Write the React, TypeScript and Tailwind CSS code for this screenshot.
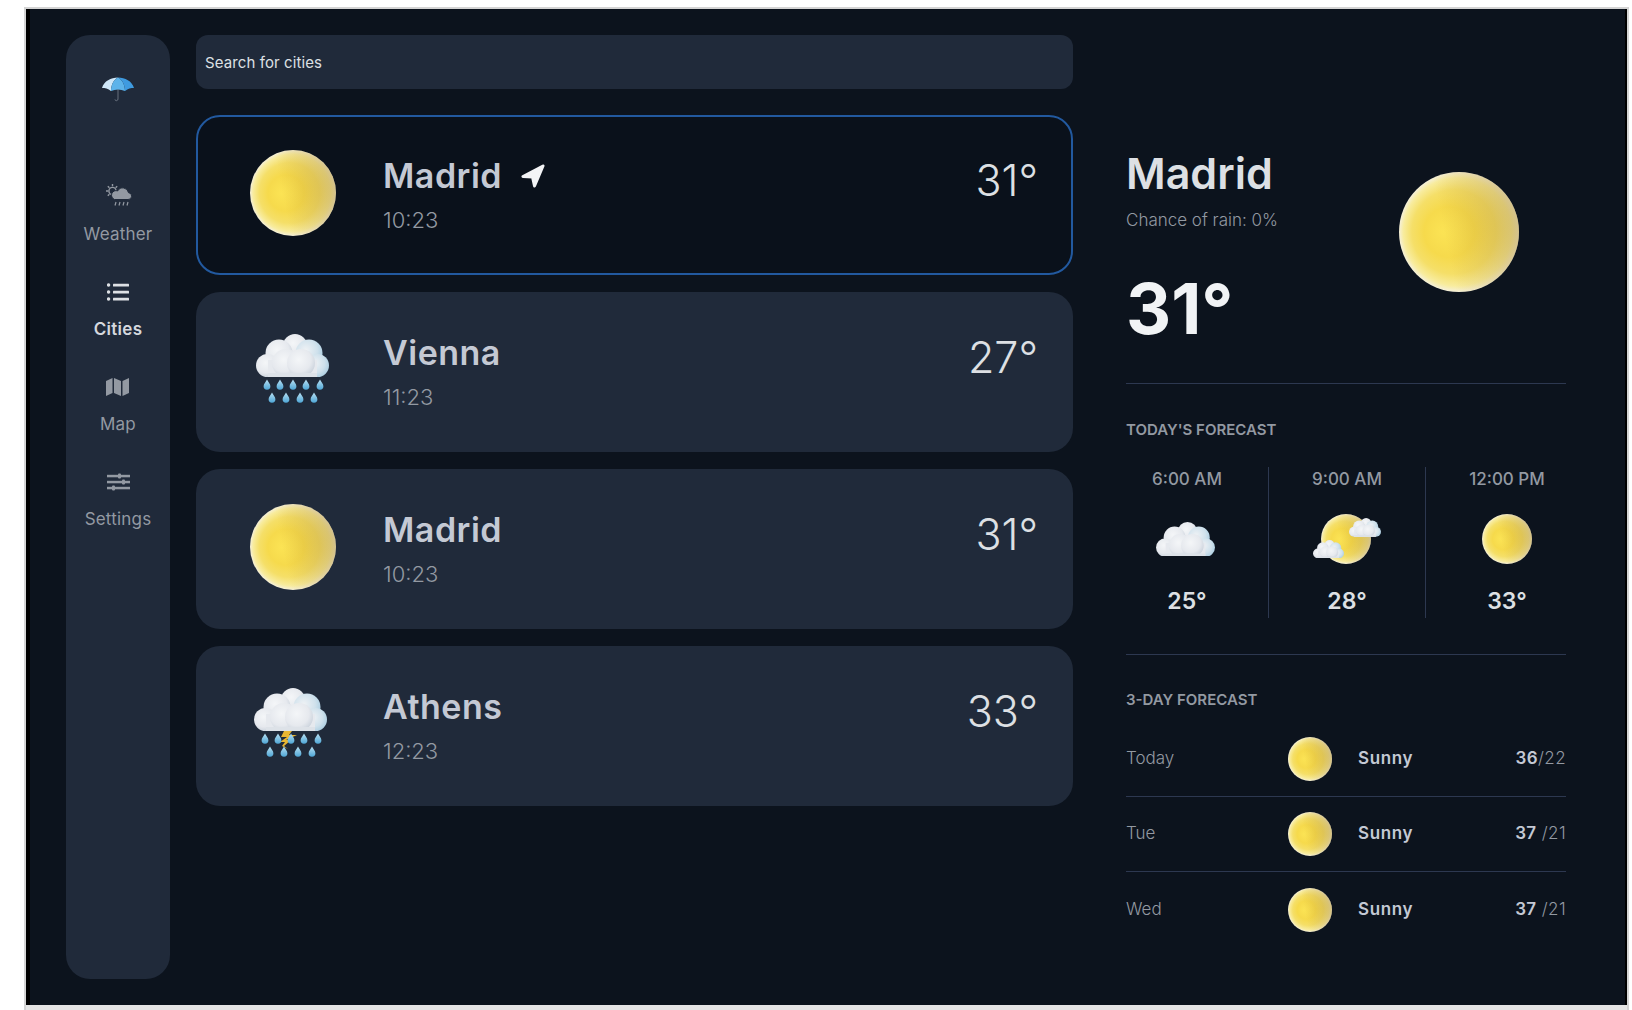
const Defs = () => (
  <svg className="absolute h-0 w-0" aria-hidden="true">
    <defs>
      <radialGradient id="sunBase" cx="50%" cy="50%" r="50%" fx="36%" fy="50%">
        <stop offset="0%" stopColor="#fbe354" />
        <stop offset="42%" stopColor="#f6da4c" />
        <stop offset="70%" stopColor="#f5df68" />
        <stop offset="90%" stopColor="#f8ec9e" />
        <stop offset="100%" stopColor="#f5f0da" />
      </radialGradient>
      <linearGradient id="sunShade" x1="0" y1="0.6" x2="1" y2="0.4">
        <stop offset="38%" stopColor="#b8902a" stopOpacity="0" />
        <stop offset="100%" stopColor="#a8862e" stopOpacity="0.45" />
      </linearGradient>
      <radialGradient id="puff" cx="42%" cy="38%" r="62%">
        <stop offset="0%" stopColor="#f4f6f8" />
        <stop offset="70%" stopColor="#e6e9ee" />
        <stop offset="100%" stopColor="#cfd6df" />
      </radialGradient>
      <radialGradient id="puffBlue" cx="38%" cy="40%" r="66%">
        <stop offset="0%" stopColor="#eff2f5" />
        <stop offset="65%" stopColor="#cfe1ec" />
        <stop offset="100%" stopColor="#aecfe2" />
      </radialGradient>
      <linearGradient id="drop" x1="0" y1="0" x2="0" y2="1">
        <stop offset="0%" stopColor="#b9e0f2" />
        <stop offset="100%" stopColor="#4ea6d6" />
      </linearGradient>
    </defs>
  </svg>
);

const Sun = ({ size }: { size: number }) => (
  <svg width={size} height={size} viewBox="0 0 100 100" className="shrink-0">
    <circle cx="50" cy="50" r="50" fill="url(#sunBase)" />
    <circle cx="50" cy="50" r="50" fill="url(#sunShade)" />
  </svg>
);

// cloud is 73 wide, 43 high in its own units
const CloudShape = () => (
  <g>
    <circle cx="39" cy="12" r="12" fill="url(#puff)" />
    <circle cx="23" cy="19" r="13.500" fill="url(#puff)" />
    <circle cx="53" cy="19" r="13.500" fill="url(#puffBlue)" />
    <circle cx="11.500" cy="31.500" r="11.500" fill="url(#puff)" />
    <circle cx="61.500" cy="31.500" r="11.500" fill="url(#puffBlue)" />
    <rect x="12" y="26" width="49" height="17" fill="#e6e9ee" />
    <circle cx="30" cy="29" r="14" fill="url(#puff)" />
    <circle cx="45" cy="29" r="14" fill="url(#puff)" />
    <rect x="12" y="39" width="49" height="4" fill="#dde2e8" />
  </g>
);

const Drop = ({ x, y }: { x: number; y: number }) => (
  <path
    d={`M${x} ${y - 5.5}c1.2 2.6 3.4 4.4 3.4 6.8a3.4 3.4 0 0 1-6.8 0c0-2.4 2.2-4.200 3.400-6.800z`}
    fill="url(#drop)"
  />
);

const topDrops = [17, 30, 43, 56, 70];
const lowDrops = [22, 36, 50, 64];

const RainIcon = ({ bolt }: { bolt?: boolean }) => (
  <svg width="86" height="86" viewBox="0 0 86 86" className="shrink-0">
    <g transform={bolt ? 'translate(-2 0)' : undefined}>
      {bolt && (
        <path
          d="M36 50h8l-3 4h8l-11 5h5l-7 6 4 3-6-3 3-4h-5l7-5h-6z"
          fill="#e8b531"
        />
      )}
      {topDrops.map((x) => (
        <Drop key={x} x={x} y={58} />
      ))}
      {lowDrops.map((x) => (
        <Drop key={x} x={x} y={71} />
      ))}
      <g transform="translate(6 7)">
        <CloudShape />
      </g>
    </g>
  </svg>
);

const Cloud = ({ width }: { width: number }) => (
  <svg width={width} height={(width * 43) / 73} viewBox="0 0 73 43">
    <CloudShape />
  </svg>
);

const PartlyCloudy = () => (
  <div className="relative h-[50px] w-[68px]">
    <div className="absolute left-[8px] top-0">
      <Sun size={50} />
    </div>
    <div className="absolute left-[36px] top-[4px]">
      <Cloud width={32} />
    </div>
    <div className="absolute left-0 top-[26px]">
      <Cloud width={31} />
    </div>
  </div>
);

const Logo = () => (
  <svg width="32" height="25" viewBox="0 0 32 25">
    <path d="M16 12v10c0 2.200-3 2.200-3 .4" fill="none" stroke="#6f7784" strokeWidth="0.9" />
    <path d="M0 11C2 4 9 0.500 16 0.500 11 3 9 9 9 14 6 11.500 3 11 0 11z" fill="#cfe7f8" />
    <path d="M9 14c0-5 2-11 7-13.500 5 2.500 7 8.500 7 13.500-4.500-2-9.500-2-14 0z" fill="#5cb3ea" />
    <path d="M23 14c0-5-2-11-7-13.500 7 0 14 3.500 16 10.500-3 0-6 .5-9 3z" fill="#3f9be0" />
  </svg>
);

const WeatherNav = () => (
  <svg width="27" height="24" viewBox="0 0 27 24" fill="none" stroke="#9399a2" className="-mt-[4px]">
    <circle cx="7.500" cy="8" r="3.600" strokeWidth="1.400" />
    <path
      d="M7.500 1v2.200M1 8h2.200M2.800 3.200l1.600 1.600M12.200 3.200l-1.600 1.600M2.800 12.800l1.600-1.600"
      strokeWidth="1.400"
    />
    <path
      d="M9.500 16.500h13.500a3.400 3.400 0 0 0 .5-6.800 5.800 5.800 0 0 0-10.800-1.800 4.400 4.400 0 0 0-3.200 8.600z"
      fill="#9399a2"
      stroke="#202a3a"
    />
    <path d="M11 19l-1 3.500M15 19l-1 3.500M19 19l-1 3.500M23 19l-1 3.500" strokeWidth="1.200" />
  </svg>
);

const ListNav = () => (
  <svg width="22" height="18" viewBox="0 0 22 18" fill="#dde0e4">
    <circle cx="1.600" cy="2" r="1.700" />
    <circle cx="1.600" cy="9" r="1.700" />
    <circle cx="1.600" cy="16" r="1.700" />
    <rect x="6" y="0.700" width="16" height="2.700" rx="0.500" />
    <rect x="6" y="7.700" width="16" height="2.700" rx="0.500" />
    <rect x="6" y="14.700" width="16" height="2.700" rx="0.500" />
  </svg>
);

const MapNav = () => (
  <svg width="23" height="18" viewBox="0 0 23 18" fill="#9399a2">
    <path d="M0 3l6.500-3v15L0 18z" />
    <path d="M8 0l7 3v15l-7-3z" />
    <path d="M16.500 3L23 0v15l-6.500 3z" />
  </svg>
);

const SlidersNav = () => (
  <svg width="23" height="18" viewBox="0 0 23 18" fill="#9399a2">
    <rect y="1.800" width="23" height="2.500" />
    <rect y="7.800" width="23" height="2.500" />
    <rect y="13.800" width="23" height="2.500" />
    <rect x="11" y="0.500" width="3" height="5" rx="1" />
    <rect x="15" y="6.500" width="3" height="5" rx="1" />
    <rect x="5" y="12.500" width="3" height="5" rx="1" />
  </svg>
);

const NavArrow = () => (
  <svg width="24" height="24" viewBox="0 0 24 24" fill="#f3f4f6">
    <path
      d="M22 2L2 12.500 11.500 13 13.500 22z"
      stroke="#f3f4f6"
      strokeWidth="3"
      strokeLinejoin="round"
    />
  </svg>
);

const navItems = [
  { label: 'Weather', icon: <WeatherNav />, active: false },
  { label: 'Cities', icon: <ListNav />, active: true },
  { label: 'Map', icon: <MapNav />, active: false },
  { label: 'Settings', icon: <SlidersNav />, active: false },
];

const cities = [
  { name: 'Madrid', time: '10:23', temp: '31°', icon: <Sun size={86} />, selected: true },
  { name: 'Vienna', time: '11:23', temp: '27°', icon: <RainIcon />, selected: false },
  { name: 'Madrid', time: '10:23', temp: '31°', icon: <Sun size={86} />, selected: false },
  { name: 'Athens', time: '12:23', temp: '33°', icon: <RainIcon bolt />, selected: false },
];

const todays = [
  { time: '6:00 AM', temp: '25°', icon: <div className="mr-[3px]"><Cloud width={59} /></div> },
  { time: '9:00 AM', temp: '28°', icon: <PartlyCloudy /> },
  { time: '12:00 PM', temp: '33°', icon: <Sun size={50} /> },
];

const days = [
  { day: 'Today', high: '36', low: '/22' },
  { day: 'Tue', high: '37', low: ' /21' },
  { day: 'Wed', high: '37', low: ' /21' },
];

const Sidebar = () => (
  <aside className="flex h-[944px] w-[104px] shrink-0 flex-col items-center rounded-[24px] bg-[#202a3a] pt-[42px]">
    <Logo />
    <nav className="mt-[82px] flex flex-col items-center gap-[31px]">
      {navItems.map((item) => (
        <div key={item.label} className="flex h-[64px] flex-col items-center">
          <div className="flex h-[26px] items-center">{item.icon}</div>
          <span
            className={
              item.active
                ? 'mt-[12px] text-[17px] leading-[24px] font-semibold tracking-[0.3px] text-[#d5d8de]'
                : 'mt-[12px] text-[17px] leading-[24px] tracking-[0.2px] text-[#9399a2]'
            }
          >
            {item.label}
          </span>
        </div>
      ))}
    </nav>
  </aside>
);

const CityCard = ({ city }: { city: (typeof cities)[number] }) => (
  <div
    className={
      city.selected
        ? 'flex h-[160px] items-center rounded-[24px] border-2 border-[#22599f] bg-[#0a111b] pl-[52px] pr-[33px]'
        : 'flex h-[160px] items-center rounded-[24px] bg-[#202a3a] pl-[54px] pr-[35px]'
    }
  >
    <div className="-mt-[5px] flex h-[86px] w-[86px] items-center justify-center">{city.icon}</div>
    <div className="-mt-[1px] ml-[47px] flex-1">
      <div className="flex items-center gap-[19px]">
        <span className="text-[34px] leading-[40px] font-semibold tracking-[0.5px] text-[#c4c9d4]">{city.name}</span>
        {city.selected && <NavArrow />}
      </div>
      <div className="mt-[10px] text-[22px] leading-[28px] font-light text-[#9399a2]">{city.time}</div>
    </div>
    <div className="-mt-[30px] text-[43px] leading-[52px] font-light text-[#dde0e4]">{city.temp}</div>
  </div>
);

const SectionLabel = ({ children }: { children: string }) => (
  <h3 className="text-[15px] leading-[20px] font-semibold text-[#9399a2]">{children}</h3>
);

const Details = () => (
  <section className="ml-[53px] w-[440px] shrink-0 pt-[110px]">
    <div className="flex h-[239px] justify-between border-b border-[#2d3850] pr-[47px]">
      <div>
        <h1 className="mt-[3px] text-[43px] leading-[50px] font-semibold text-[#dde0e4]">Madrid</h1>
        <p className="mt-[10px] text-[17px] leading-[24px] font-light text-[#9399a2]">Chance of rain: 0%</p>
        <p className="mt-[37px] text-[70px] leading-[80px] font-bold text-[#f1f3f5]">31°</p>
      </div>
      <div className="mt-[27px]">
        <Sun size={120} />
      </div>
    </div>
    <div className="border-b border-[#2d3850] pb-[36px] pt-[36px]">
      <SectionLabel>TODAY'S FORECAST</SectionLabel>
      <div className="-ml-[20px] mt-[27px] grid w-[482px] grid-cols-[162px_158px_162px]">
        {todays.map((slot, i) => (
          <div
            key={slot.time}
            className={
              i === 1
                ? 'flex h-[151px] flex-col items-center border-x border-[#2d3850]'
                : 'flex h-[151px] flex-col items-center'
            }
          >
            <div className="text-[17px] leading-[24px] font-medium text-[#9399a2]">{slot.time}</div>
            <div className="mt-[21px] flex h-[54px] items-center justify-center">{slot.icon}</div>
            <div className="mt-[21px] text-[23px] leading-[28px] font-semibold text-[#dde0e4]">{slot.temp}</div>
          </div>
        ))}
      </div>
    </div>
    <div className="pt-[35px]">
      <SectionLabel>3-DAY FORECAST</SectionLabel>
      <div className="mt-[12px]">
        {days.map((d, i) => (
          <div
            key={d.day}
            className={
              i < 2
                ? 'flex h-[75px] items-center border-b border-[#2d3850]'
                : 'flex h-[75px] items-center'
            }
          >
            <span className="w-[162px] text-[17px] font-light text-[#9399a2]">{d.day}</span>
            <Sun size={44} />
            <span className="ml-[26px] text-[17px] font-semibold tracking-[0.6px] text-[#c4c9d4]">Sunny</span>
            <span className="ml-auto whitespace-pre text-[17px] font-light tracking-[0.4px] text-[#9399a2]">
              <span className="font-semibold text-[#c4c9d4]">{d.high}</span>
              {d.low}
            </span>
          </div>
        ))}
      </div>
    </div>
  </section>
);

export default function App() {
  return (
    <div className="h-[1010px] overflow-hidden bg-white pl-[24px] pt-[7px] font-['Inter',sans-serif]">
      <Defs />
      <div className="h-[1003px] w-[1605px] border-x-2 border-t-2 border-[#d4d4d4] bg-[#e5e5e5]">
        <div className="flex h-[996px] border-l-[4px] border-r-[2px] border-black bg-[#0c131d] pl-[36px] pt-[26px]">
          <Sidebar />
          <main className="ml-[26px] w-[877px] shrink-0">
            <div className="flex h-[54px] items-center rounded-[12px] bg-[#202a3a] px-[9px] pt-[3px] text-[15px] tracking-[0.1px] text-[#dde0e4]">
              Search for cities
            </div>
            <div className="mt-[26px] flex flex-col gap-[17px]">
              {cities.map((city, i) => (
                <CityCard key={i} city={city} />
              ))}
            </div>
          </main>
          <Details />
        </div>
      </div>
    </div>
  );
}
